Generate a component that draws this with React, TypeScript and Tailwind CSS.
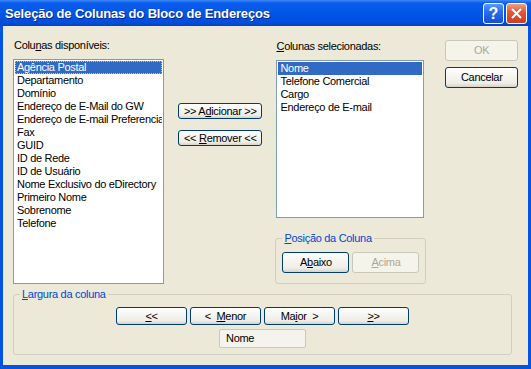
import React from "react"

const available = [
  "Agência Postal",
  "Departamento",
  "Domínio",
  "Endereço de E-Mail do GW",
  "Endereço de E-mail Preferencial",
  "Fax",
  "GUID",
  "ID de Rede",
  "ID de Usuário",
  "Nome Exclusivo do eDirectory",
  "Primeiro Nome",
  "Sobrenome",
  "Telefone",
]

const selected = ["Nome", "Telefone Comercial", "Cargo", "Endereço de E-mail"]

const btn =
  "flex items-center justify-center rounded-[3px] border border-[#003c74] bg-[linear-gradient(180deg,#ffffff_0%,#f7f6f2_35%,#eeede7_80%,#d8d2c6_100%)] text-[11px] leading-[13px] text-black whitespace-pre"
const btnOff =
  "flex items-center justify-center rounded-[3px] border border-[#c9c7ba] bg-[#f5f4ea] text-[11px] leading-[13px] text-[#aca899] whitespace-pre"

function ListBox({ items, focus, className }: { items: string[]; focus?: boolean; className: string }) {
  return (
    <div className={`bg-white border border-[#7f9db9] p-[1px] overflow-hidden ${className}`}>
      {items.map((it, i) => (
        <div
          key={i}
          className={
            i === 0
              ? `h-[13px] px-[2px] leading-[13px] whitespace-nowrap overflow-hidden bg-[#316ac5] text-white ${focus ? "outline-1 outline-dotted outline-[#e6c476] -outline-offset-1" : ""}`
              : "h-[13px] px-[2px] leading-[13px] whitespace-nowrap overflow-hidden text-black"
          }
        >
          {it}
        </div>
      ))}
    </div>
  )
}

export default function App() {
  return (
    <div
      className="w-[531px] h-[369px] flex flex-col bg-[#0553e1] text-[11px] leading-[13px]"
      style={{ fontFamily: '"Liberation Sans", Arial, sans-serif' }}
    >
      {/* title bar */}
      <div className="h-[26px] flex items-center pl-[5px] pr-[4px] bg-[linear-gradient(180deg,#3d8af7_0%,#0a5ced_12%,#0055e5_55%,#004fde_85%,#0043c4_100%)]">
        <div className="flex-1 text-white font-bold text-[13px] tracking-[-0.15px] [text-shadow:1px_1px_0_#0a2a8a]">
          Seleção de Colunas do Bloco de Endereços
        </div>
        <div className="w-[21px] h-[21px] rounded-[3px] border border-white bg-[linear-gradient(180deg,#5a9bff_0%,#2a6cf0_40%,#1450d8_100%)] flex items-center justify-center text-white font-bold text-[16px]">
          ?
        </div>
        <div className="w-[21px] h-[21px] ml-[2px] rounded-[3px] border border-white bg-[linear-gradient(180deg,#f0a080_0%,#e2583a_40%,#c9401f_100%)] flex items-center justify-center">
          <svg width="11" height="11" viewBox="0 0 11 11">
            <path d="M1 1 L10 10 M10 1 L1 10" stroke="white" strokeWidth="2" />
          </svg>
        </div>
      </div>

      {/* client area */}
      <div className="flex-1 mx-[3px] mb-[4px] bg-[#ece9d8] px-[10px] pt-[13px] flex flex-col tracking-[-0.3px]">
        <div className="flex">
          {/* available */}
          <div className="w-[151px] flex flex-col">
            <div className="h-[13px] pl-[1px]">
              Colu<u>n</u>as disponíveis:
            </div>
            <ListBox items={available} focus className="mt-[7px] h-[225px]" />
          </div>

          {/* add / remove */}
          <div className="w-[85px] ml-[14px] pt-[64px] flex flex-col gap-[11px]">
            <div className={`${btn} h-[16px]`}>
              {">> A"}<u>d</u>{"icionar >>"}
            </div>
            <div className={`${btn} h-[16px]`}>
              {"<< "}<u>R</u>{"emover <<"}
            </div>
          </div>

          {/* selected */}
          <div className="w-[150px] ml-[13px] flex flex-col">
            <div className="h-[13px] pl-[1px] mt-[1px]">
              <u>C</u>olunas selecionadas:
            </div>
            <ListBox items={selected} className="mt-[7px] mx-[1px] h-[158px]" />
            <fieldset className="mt-[14px] border border-[#d0d0bf] rounded-[3px] px-[6px] pb-[10px]">
              <legend className="px-[2px] text-[#0046d5] leading-[13px]">
                <u>P</u>osição da Coluna
              </legend>
              <div className="flex gap-[3px] mt-[7px]">
                <div className={`${btn} w-[67px] h-[21px]`}>
                  A<u>b</u>aixo
                </div>
                <div className={`${btnOff} w-[67px] h-[21px]`}>
                  <u>A</u>cima
                </div>
              </div>
            </fieldset>
          </div>

          {/* ok / cancel */}
          <div className="w-[73px] ml-[20px] pt-[1px] flex flex-col gap-[6px]">
            <div className={`${btnOff} h-[21px]`}>OK</div>
            <div className={`${btn} h-[21px]`}>Cancelar</div>
          </div>
        </div>

        {/* column width */}
        <fieldset className="mt-[4px] w-[499px] border border-[#d0d0bf] rounded-[3px] pb-[6px] flex flex-col items-center">
          <legend className="ml-[6px] px-[2px] text-[#0046d5] leading-[13px]">
            <u>L</u>argura da coluna
          </legend>
          <div className="flex gap-[3px] mt-[6px]">
            <div className={`${btn} w-[71px] h-[18px]`}>
              <u>&lt;</u>&lt;
            </div>
            <div className={`${btn} w-[71px] h-[18px]`}>
              {"<  "}<u>M</u>enor
            </div>
            <div className={`${btn} w-[71px] h-[18px]`}>
              Ma<u>i</u>{"or  >"}
            </div>
            <div className={`${btn} w-[71px] h-[18px]`}>
              <u>&gt;</u>&gt;
            </div>
          </div>
          <div className="mt-[4px] w-[87px] h-[19px] rounded-[2px] border border-[#cac8bb] bg-[#f4f3ee] pl-[6px] flex items-center">
            Nome
          </div>
        </fieldset>
      </div>
    </div>
  )
}
